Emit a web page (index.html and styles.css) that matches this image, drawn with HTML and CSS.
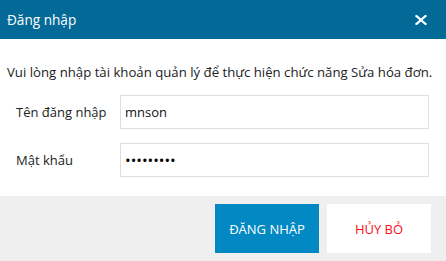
FILE: index.html
```html
<!DOCTYPE html>
<html lang="vi">
<head>
    <meta charset="UTF-8">
    <meta name="viewport" content="width=device-width, initial-scale=1.0">
    <title>Đăng nhập</title>
    <link rel="stylesheet" href="styles.css">
</head>
<body>
    <div class="dialog">
        <div class="dialog-header">
            <span class="dialog-title">Đăng nhập</span>
            <button class="close-btn" aria-label="Đóng">
                <svg width="12" height="10" viewBox="0 0 12 10">
                    <path d="M1.5 1 L10.5 9 M10.5 1 L1.5 9" stroke="#fff" stroke-width="2.2" stroke-linecap="square"/>
                </svg>
            </button>
        </div>

        <div class="dialog-body">
            <p class="note">Vui lòng nhập tài khoản quản lý để thực hiện chức năng Sửa hóa đơn.</p>
            <div class="form-row">
                <label for="username">Tên đăng nhập</label>
                <input type="text" id="username" value="mnson">
            </div>
            <div class="form-row">
                <label for="password">Mật khẩu</label>
                <input type="password" id="password" class="pass" value="123456789">
            </div>
        </div>

        <div class="dialog-footer">
            <button class="btn btn-primary">ĐĂNG NHẬP</button>
            <button class="btn btn-cancel">HỦY BỎ</button>
        </div>
    </div>
</body>
</html>
```

FILE: styles.css
```css
body {
    margin: 0;
    font-family: 'Open Sans', 'Noto Sans', sans-serif;
    font-size: 13px;
    color: #222;
    background: #fff;
}

.dialog {
    width: 446px;
    height: 261px;
    display: flex;
    flex-direction: column;
}

.dialog-header {
    height: 39px;
    flex-shrink: 0;
    background: #036a98;
    color: #fff;
    display: flex;
    align-items: center;
    justify-content: space-between;
    padding: 0 19px 0 7px;
}

.dialog-title {
    font-size: 13.6px;
    margin-top: -1px;
}

.close-btn {
    background: none;
    border: none;
    padding: 0;
    display: flex;
    cursor: pointer;
}

.dialog-body {
    flex: 1;
    padding: 24px 17px 0 7px;
}

.note {
    margin: 0 0 14px;
    line-height: 18px;
    font-size: 13.2px;
    white-space: nowrap;
}

.form-row {
    display: flex;
    align-items: center;
    margin-bottom: 14px;
}

.form-row label {
    width: 104px;
    margin-left: 9px;
}

.form-row input {
    flex: 1;
    height: 34px;
    box-sizing: border-box;
    border: 1px solid #dedede;
    padding: 0 4px;
    font-family: inherit;
    font-size: 13px;
    color: #111;
    outline: none;
}

.form-row input.pass {
    font-size: 15px;
    color: #000;
}

.dialog-footer {
    height: 65px;
    box-sizing: border-box;
    flex-shrink: 0;
    background: #efefef;
    display: flex;
    justify-content: flex-end;
    align-items: flex-start;
    gap: 8px;
    padding: 8px 15px 0 0;
}

.btn {
    width: 104px;
    height: 49px;
    border: none;
    font-family: inherit;
    font-size: 13px;
    cursor: pointer;
}

.btn-primary {
    background: #0288c2;
    color: #fff;
}

.btn-cancel {
    background: #fff;
    color: #fb0d1b;
}
```
